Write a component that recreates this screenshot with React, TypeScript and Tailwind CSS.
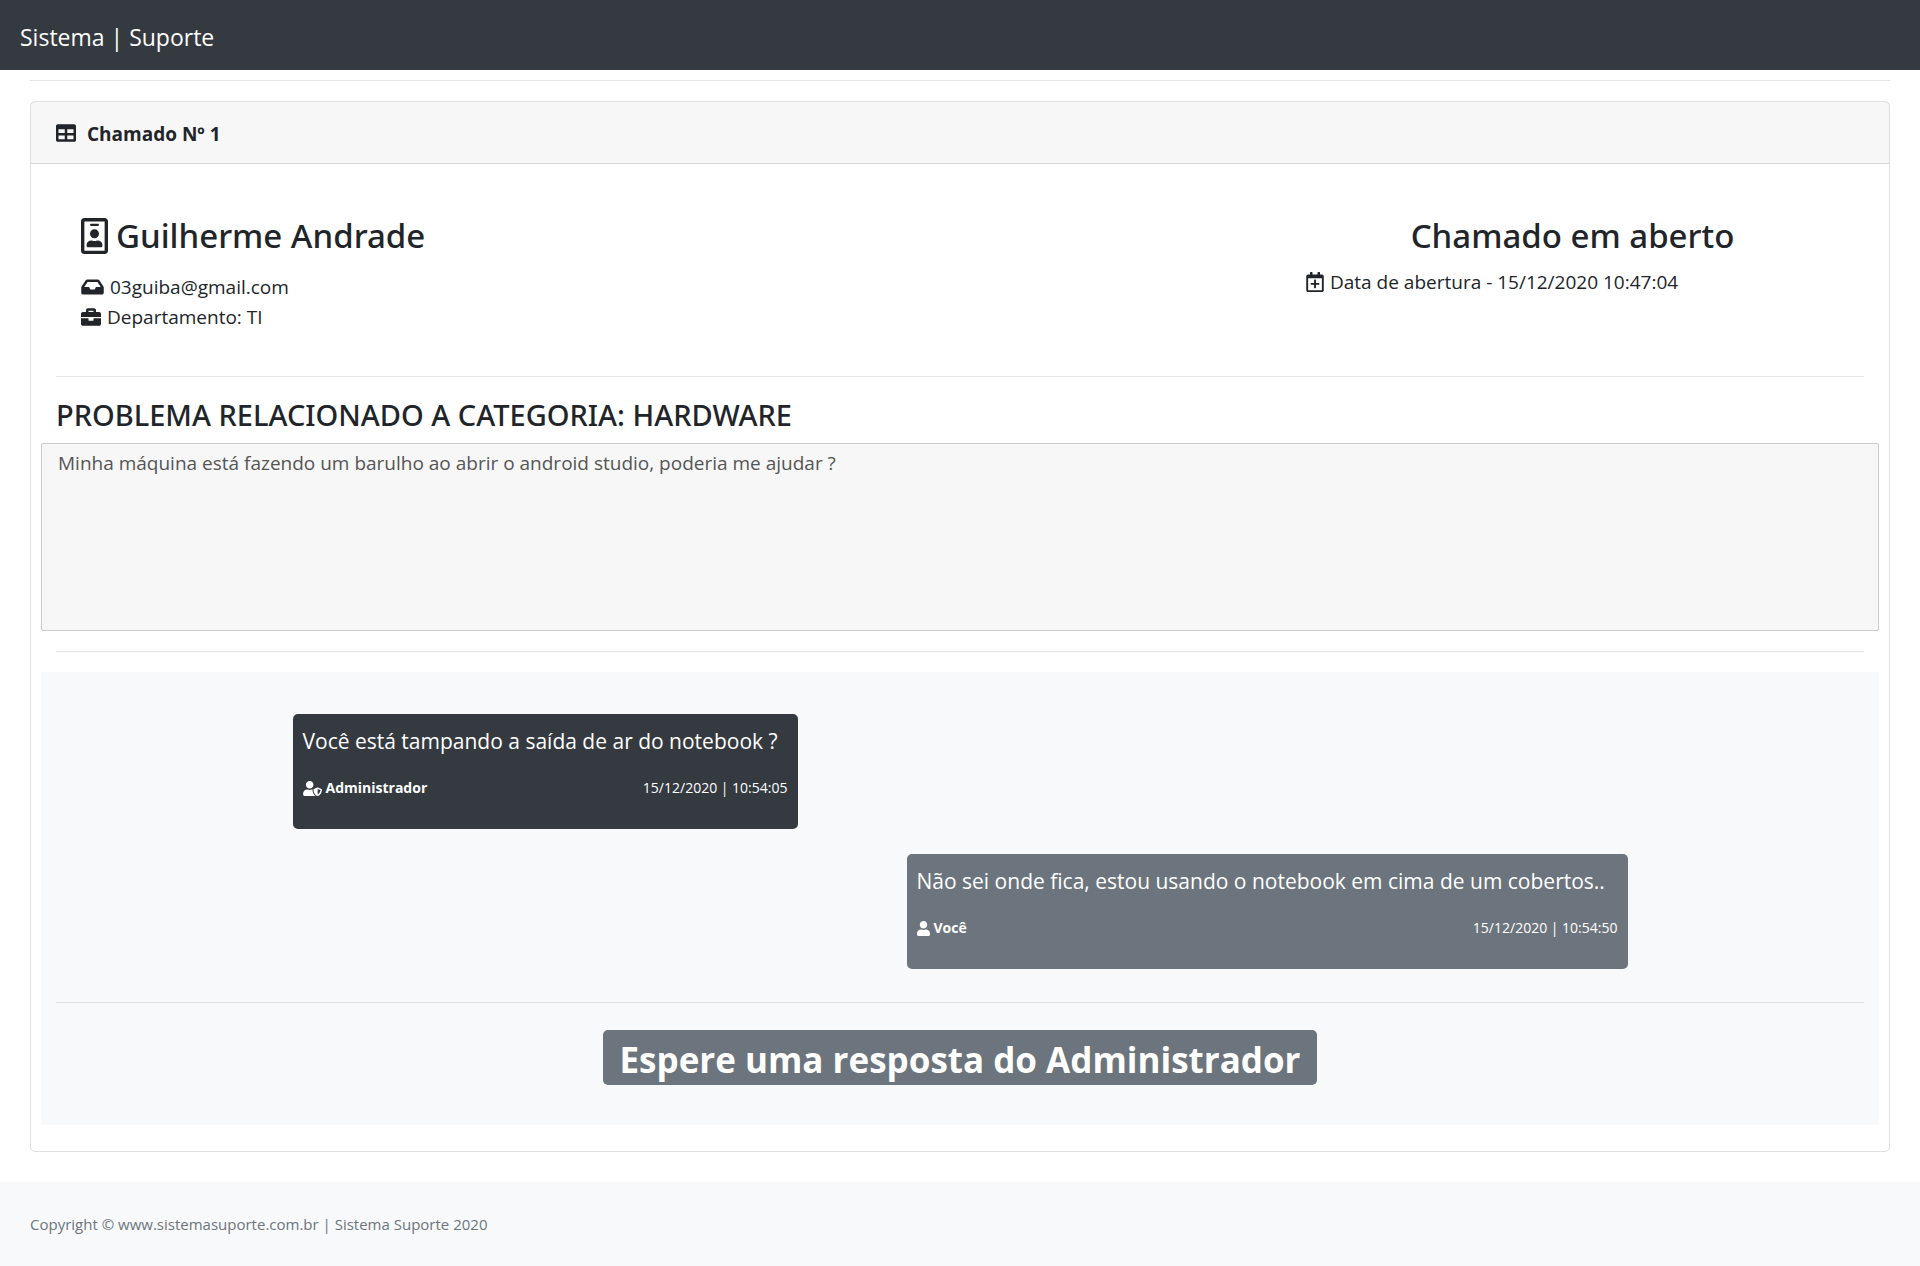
import {
  FaBriefcase,
  FaInbox,
  FaRegCalendarPlus,
  FaRegIdBadge,
  FaTable,
  FaUser,
  FaUserShield,
} from "react-icons/fa";
import type { IconType } from "react-icons";

type Message = {
  text: string;
  author: string;
  time: string;
  icon: IconType;
  iconWidth: string;
  tone: string;
};

const messages: Message[] = [
  {
    text: "Você está tampando a saída de ar do notebook ?",
    author: "Administrador",
    time: "15/12/2020 | 10:54:05",
    icon: FaUserShield,
    iconWidth: "w-[19px]",
    tone: "self-start bg-[#343a40] w-[505px]",
  },
  {
    text: "Não sei onde fica, estou usando o notebook em cima de um cobertos..",
    author: "Você",
    time: "15/12/2020 | 10:54:50",
    icon: FaUser,
    iconWidth: "w-[13px]",
    tone: "self-end bg-[#6c757d] w-[721px]",
  },
];

function Rule({ className = "" }: { className?: string }) {
  return <hr className={`border-t border-black/10 ${className}`} />;
}

function Bubble({ message }: { message: Message }) {
  const Icon = message.icon;
  return (
    <article
      className={`rounded-[5px] px-2.5 pt-2.5 pb-[27px] whitespace-nowrap text-white ${message.tone}`}
    >
      <p className="text-[21px] leading-[34px]">{message.text}</p>
      <footer className="mt-4 flex items-center justify-between text-sm leading-7">
        <span className="flex items-center gap-1 font-bold">
          <Icon className={`h-[15px] ${message.iconWidth}`} />
          {message.author}
        </span>
        <time>{message.time}</time>
      </footer>
    </article>
  );
}

export default function App() {
  return (
    <div className="flex min-h-screen flex-col bg-white font-['Open_Sans','Noto_Sans',sans-serif] text-[19px] leading-[30px] text-[#212529]">
      <nav className="flex h-[70px] items-center bg-[#343a40] px-5">
        <a href="#" className="pt-1 text-[23px] text-white">
          Sistema | Suporte
        </a>
      </nav>

      <main className="grow px-[30px] pt-2.5">
        <Rule className="mb-5" />
        <section className="rounded-[5px] border border-black/[0.125]">
          <header className="flex h-[62px] items-center gap-[11px] border-b border-black/[0.125] bg-black/[0.03] px-[25px] font-bold">
            <FaTable className="size-5" />
            <h1 className="pt-0.5 text-[19px]">Chamado Nº 1</h1>
          </header>

          <div className="px-2.5 pb-[26px]">
            <div className="flex justify-between px-10 pt-[51px]">
              <div>
                <h2 className="mb-[15px] flex items-center gap-2 font-['Noto_Sans',sans-serif] text-[33px] leading-[42px] font-medium">
                  <FaRegIdBadge className="h-9 w-[27px]" />
                  Guilherme Andrade
                </h2>
                <p className="flex items-center gap-1.5">
                  <FaInbox className="h-5 w-[23px]" />
                  03guiba@gmail.com
                </p>
                <p className="flex items-center gap-1.5">
                  <FaBriefcase className="size-5" />
                  Departamento: TI
                </p>
              </div>
              <div className="w-[533px]">
                <h2 className="mb-2.5 text-center font-['Noto_Sans',sans-serif] text-[33px] leading-[42px] font-medium">
                  Chamado em aberto
                </h2>
                <p className="flex items-center gap-1.5">
                  <FaRegCalendarPlus className="h-5 w-[18px]" />
                  Data de abertura - 15/12/2020 10:47:04
                </p>
              </div>
            </div>

            <Rule className="mx-[15px] mt-11 mb-5" />
            <label
              htmlFor="problem"
              className="mb-2.5 block px-[15px] font-['Noto_Sans',sans-serif] text-[29px] leading-9 font-medium"
            >
              PROBLEMA RELACIONADO A CATEGORIA: HARDWARE
            </label>
            <textarea
              id="problem"
              readOnly
              className="block h-[188px] w-full resize-none rounded-[2px] border border-[#ccc] bg-[#f7f7f7] px-4 py-1 text-[19px] leading-[30px] text-[#555]"
              defaultValue="Minha máquina está fazendo um barulho ao abrir o android studio, poderia me ajudar ?"
            />
            <Rule className="mx-[15px] my-5" />

            <div className="bg-[#f8f9fa] px-[15px] pt-[42px] pb-10">
              <div className="mx-auto flex w-full max-w-[1335px] flex-col gap-[25px]">
                {messages.map((message) => (
                  <Bubble key={message.time} message={message} />
                ))}
              </div>
              <Rule className="mt-[33px] mb-[27px]" />
              <p className="mx-auto flex h-[55px] w-[714px] items-center justify-center rounded-[5px] bg-[#6c757d] pt-1 text-[35px] font-bold whitespace-nowrap text-white">
                Espere uma resposta do Administrador
              </p>
            </div>
          </div>
        </section>
      </main>

      <footer className="mt-[30px] flex h-[84px] items-center bg-[#f8f9fa] px-[30px] text-[15px] text-[#6c757d]">
        Copyright © www.sistemasuporte.com.br | Sistema Suporte 2020
      </footer>
    </div>
  );
}
